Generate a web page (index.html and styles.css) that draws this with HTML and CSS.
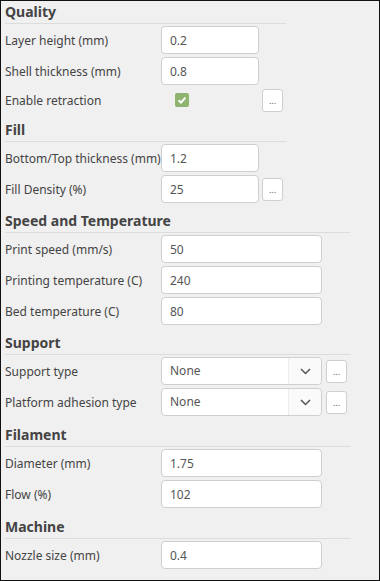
FILE: index.html
```html
<!DOCTYPE html>
<html lang="en">
<head>
  <meta charset="UTF-8">
  <meta name="viewport" content="width=device-width, initial-scale=1.0">
  <title>Print Settings</title>
  <link rel="stylesheet" href="styles.css">
</head>
<body>
  <div class="panel">
    <div class="group">
      <h2 class="group-title">Quality</h2>
      <div class="rows">
        <div class="row"><label>Layer height (mm)</label><input class="field" type="text" value="0.2"></div>
        <div class="row"><label>Shell thickness (mm)</label><input class="field" type="text" value="0.8"></div>
        <div class="row short">
          <label>Enable retraction</label>
          <div><span class="check"><svg width="14" height="14" viewBox="0 0 14 14"><path d="M3.6 7.3 L6 9.6 L10.4 4.6" fill="none" stroke="#fff" stroke-width="2"/></svg></span></div>
          <button class="more">...</button>
        </div>
      </div>
    </div>

    <div class="group">
      <h2 class="group-title">Fill</h2>
      <div class="rows">
        <div class="row"><label>Bottom/Top thickness (mm)</label><input class="field" type="text" value="1.2"></div>
        <div class="row"><label>Fill Density (%)</label><input class="field" type="text" value="25"><button class="more">...</button></div>
      </div>
    </div>

    <div class="group wide">
      <h2 class="group-title">Speed and Temperature</h2>
      <div class="rows">
        <div class="row"><label>Print speed (mm/s)</label><input class="field" type="text" value="50"></div>
        <div class="row"><label>Printing temperature (C)</label><input class="field" type="text" value="240"></div>
        <div class="row"><label>Bed temperature (C)</label><input class="field" type="text" value="80"></div>
      </div>
    </div>

    <div class="group wide">
      <h2 class="group-title">Support</h2>
      <div class="rows">
        <div class="row">
          <label>Support type</label>
          <div class="select"><span class="select-value">None</span><span class="select-arrow"><svg width="11" height="7" viewBox="0 0 11 7"><path d="M1 1 L5.5 5.5 L10 1" fill="none" stroke="#555" stroke-width="1.5"/></svg></span></div>
          <button class="more">...</button>
        </div>
        <div class="row">
          <label>Platform adhesion type</label>
          <div class="select"><span class="select-value">None</span><span class="select-arrow"><svg width="11" height="7" viewBox="0 0 11 7"><path d="M1 1 L5.5 5.5 L10 1" fill="none" stroke="#555" stroke-width="1.5"/></svg></span></div>
          <button class="more">...</button>
        </div>
      </div>
    </div>

    <div class="group wide low">
      <h2 class="group-title">Filament</h2>
      <div class="rows">
        <div class="row"><label>Diameter (mm)</label><input class="field" type="text" value="1.75"></div>
        <div class="row"><label>Flow (%)</label><input class="field" type="text" value="102"></div>
      </div>
    </div>

    <div class="group wide low">
      <h2 class="group-title">Machine</h2>
      <div class="rows">
        <div class="row"><label>Nozzle size (mm)</label><input class="field" type="text" value="0.4"></div>
      </div>
    </div>
  </div>
</body>
</html>
```

FILE: styles.css
```css
* {
  margin: 0;
  padding: 0;
  box-sizing: border-box;
  font-family: "Noto Sans", sans-serif;
}
body {
  background: #f0f0f0;
}
.panel {
  width: 380px;
  height: 581px;
  border: 1px solid #111;
  background: #f0f0f0;
  padding-left: 4px;
  overflow: hidden;
}
.group {
  width: 281px;
  margin-top: 7px;
}
.group:first-child {
  margin-top: 0;
}
.group.wide {
  width: 345px;
}
.group.low {
  margin-top: 8px;
}
.group-title {
  font-size: 14px;
  font-weight: bold;
  line-height: 20px;
  padding: 1px 0;
  color: #444;
  border-bottom: 1px solid #dcdcdc;
}
.rows {
  display: flex;
  flex-direction: column;
  gap: 3px;
  padding-top: 2px;
}
.row {
  display: grid;
  grid-template-columns: 153px 98px 21px;
  column-gap: 3px;
  align-items: center;
  height: 28px;
}
.wide .row {
  grid-template-columns: 152px 161px 21px;
  column-gap: 4px;
}
.row.short {
  height: 24px;
}
.row label {
  font-size: 12px;
  color: #444;
  white-space: nowrap;
}
.field {
  height: 28px;
  width: 100%;
  border: 1px solid #cfcfcf;
  border-radius: 4px;
  background: #fff;
  padding: 0 8px;
  font-size: 12px;
  color: #555;
  outline: none;
}
.check {
  display: flex;
  width: 14px;
  height: 14px;
  margin-left: 14px;
  border-radius: 2px;
  background: #8fb46f;
}
.more {
  width: 21px;
  height: 23px;
  border: 1px solid #cfcfcf;
  border-radius: 3px;
  background: #fff;
  color: #666;
  font-size: 9px;
  cursor: pointer;
}
.select {
  display: flex;
  height: 28px;
  border: 1px solid #cfcfcf;
  border-radius: 4px;
  background: #fff;
}
.select-value {
  flex: 1;
  padding: 0 8px;
  font-size: 12px;
  line-height: 26px;
  color: #555;
}
.select-arrow {
  width: 33px;
  display: flex;
  align-items: center;
  justify-content: center;
  border-left: 1px solid #ececec;
  background: #fafafa;
  border-radius: 0 4px 4px 0;
}
```
